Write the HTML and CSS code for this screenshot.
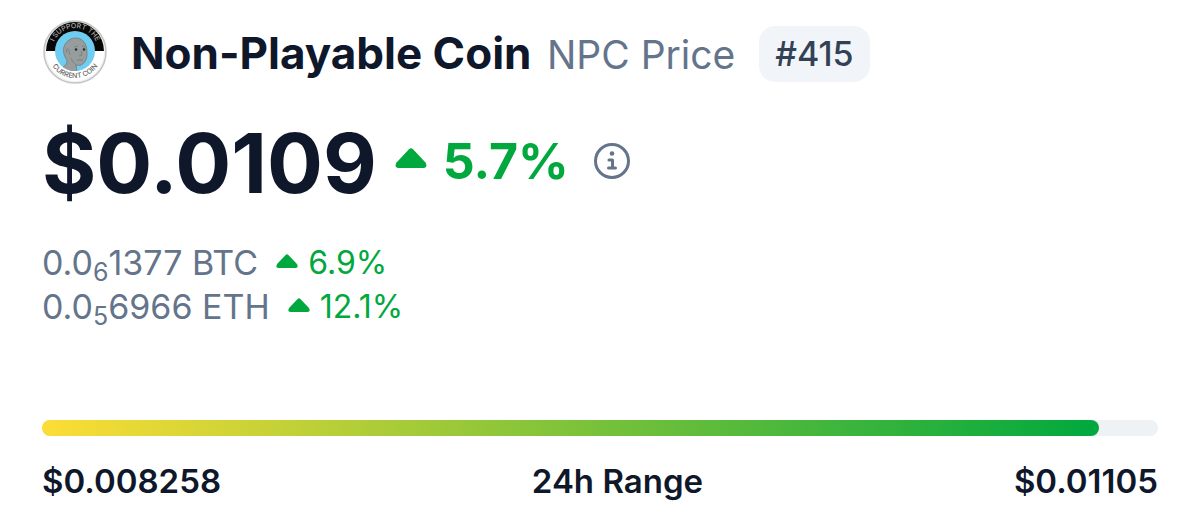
FILE: index.html
```
<!DOCTYPE html>
<html lang="en">

<head>
    <meta charset="UTF-8">
    <meta name="viewport" content="width=device-width, initial-scale=1.0">
    <title>Non-Playable Coin (NPC) Price</title>
    <link rel="stylesheet" href="styles.css">
</head>

<body>

    <main class="coin">
        <div class="coin-header">
            <svg class="coin-logo" viewBox="0 0 64 64" role="img" aria-label="Non-Playable Coin logo">
                <defs>
                    <clipPath id="face-clip">
                        <circle cx="32" cy="31" r="20" />
                    </clipPath>
                    <path id="arc-top" d="M9 31a23 23 0 0 1 46 0" />
                    <path id="arc-bottom" d="M4 30a28 28 0 0 0 56 0" />
                </defs>
                <circle cx="32" cy="32" r="31" fill="#f1f1f1" stroke="#c4c4c4" stroke-width="1.5" />
                <circle cx="32" cy="32" r="29" fill="#fff" />
                <path d="M3 31a29 29 0 0 1 58 0z" fill="#080808" />
                <circle cx="32" cy="31" r="20" fill="#70cdf2" />
                <g clip-path="url(#face-clip)">
                    <path d="M16 49c5-2 8-4 8-9-4-5-5-12-1-17 4-6 14-7 18-1 3 4 3 8 3 12 0 5-2 9-6 11-2 1-4 0-5 0l1 7z" fill="#979c9d" stroke="#747b7e" stroke-width=".8" />
                    <path d="M24 33c-2-4 1-6 2-2l1 4M28 38c1 3 3 5 5 7" fill="none" stroke="#747b7e" stroke-width=".8" />
                    <path d="M38 31l1 4-3 1M34 40h6M31 27l4-1M39 26l3 1" fill="none" stroke="#747b7e" stroke-width=".8" />
                    <circle cx="33" cy="29.500" r="1.300" fill="#292d30" />
                    <circle cx="41" cy="29.500" r="1.300" fill="#292d30" />
                </g>
                <text class="logo-text logo-text-light"><textPath href="#arc-top" startOffset="50%">I SUPPORT THE</textPath></text>
                <text class="logo-text"><textPath href="#arc-bottom" startOffset="50%">CURRENT COIN</textPath></text>
            </svg>
            <h1 class="coin-name">Non-Playable Coin <span class="coin-symbol">NPC Price</span></h1>
            <span class="rank">#415</span>
        </div>

        <div class="price-row">
            <span class="price">$0.0109</span>
            <div class="price-info">
                <span class="change change-large">
                    <svg class="caret" viewBox="0 0 32 20" aria-hidden="true">
                        <path d="M14 1.2Q16 -.5 18 1.2L30.500 14.500Q33 19.500 28.500 20H3.500Q-1 19.500 1.500 14.500z" />
                    </svg>
                    5.7%
                </span>
                <button class="info" type="button" aria-label="Price information">
                    <svg viewBox="0 0 38 38" aria-hidden="true">
                        <circle cx="19" cy="19" r="16.500" />
                        <path d="M16 18h3.500v8M15.500 26h7" />
                        <circle class="info-dot" cx="19" cy="11.500" r="2.300" />
                    </svg>
                </button>
            </div>
        </div>

        <div class="pairs">
            <div class="pair">
                <span>0.0<sub>6</sub>1377 BTC</span>
                <span class="change">
                    <svg class="caret" viewBox="0 0 32 20" aria-hidden="true">
                        <path d="M14 1.2Q16 -.5 18 1.2L30.500 14.500Q33 19.500 28.500 20H3.500Q-1 19.500 1.500 14.500z" />
                    </svg>
                    6.9%
                </span>
            </div>
            <div class="pair">
                <span>0.0<sub>5</sub>6966 ETH</span>
                <span class="change">
                    <svg class="caret" viewBox="0 0 32 20" aria-hidden="true">
                        <path d="M14 1.2Q16 -.5 18 1.2L30.500 14.500Q33 19.500 28.500 20H3.500Q-1 19.500 1.500 14.500z" />
                    </svg>
                    12.1%
                </span>
            </div>
        </div>

        <div class="range-bar">
            <div class="range-fill" style="width: 94.7%"></div>
        </div>
        <div class="range-labels">
            <span>$0.008258</span>
            <span>24h Range</span>
            <span>$0.01105</span>
        </div>
    </main>

</body>

</html>
```
FILE: styles.css
```
* {
    margin: 0;
    padding: 0;
    box-sizing: border-box;
}

body {
    font-family: Inter, sans-serif;
    font-size: 33px;
    line-height: 44px;
    color: #0f172a;
    background-color: #fff;
}

.coin {
    padding: 20px 42px 8px;
}

.coin-header {
    display: flex;
    align-items: center;
}

.coin-logo {
    align-self: flex-start;
    width: 64px;
    height: 64px;
    margin-left: 1px;
    margin-right: 24px;
    flex-shrink: 0;
}

.logo-text {
    font-size: 7px;
    font-weight: 500;
    text-anchor: middle;
    fill: #666;
}

.logo-text-light {
    fill: #aaa;
}

.coin-name {
    font-size: 44px;
    font-weight: 700;
    line-height: 67px;
}

.coin-symbol {
    margin-left: 5px;
    font-size: 39px;
    font-weight: 400;
    color: #64748b;
}

.rank {
    margin-left: 24px;
    padding: 6px 16px;
    border-radius: 16px;
    font-size: 34px;
    font-weight: 500;
    color: #334155;
    background-color: #f1f5f9;
}

.price-row {
    display: flex;
    align-items: center;
    margin-top: 26px;
}

.price {
    font-size: 83px;
    font-weight: 700;
    line-height: 98px;
}

.price-info {
    display: flex;
    align-items: center;
    margin-left: 18px;
    padding-bottom: 5px;
}

.change {
    display: flex;
    align-items: center;
    gap: 10px;
    color: #00a83e;
}

.caret {
    width: 22px;
    height: 14px;
    margin-bottom: 5px;
    fill: currentColor;
}

.change-large {
    gap: 16px;
    font-size: 50px;
    font-weight: 700;
}

.change-large .caret {
    width: 32px;
    height: 20px;
}

.info {
    width: 38px;
    height: 38px;
    margin-left: 24px;
    border: none;
    background: none;
    cursor: pointer;
}

.info svg {
    display: block;
    fill: none;
    stroke: #64748b;
    stroke-width: 3;
    stroke-linecap: round;
    stroke-linejoin: round;
}

.info .info-dot {
    fill: #64748b;
    stroke: none;
}

.pairs {
    margin-top: 29px;
    font-size: 34px;
    color: #64748b;
}

.pair {
    display: flex;
    align-items: center;
    gap: 18px;
}

.pair .change {
    font-size: 32px;
}

.pair sub {
    font-size: 25px;
    line-height: 0;
    vertical-align: -6px;
}

.range-bar {
    height: 16px;
    margin-top: 91px;
    border-radius: 8px;
    background-color: #eff2f5;
}

.range-fill {
    height: 100%;
    border-radius: 8px;
    background: linear-gradient(90deg, #fddd35, #00a83e);
}

.range-labels {
    display: flex;
    justify-content: space-between;
    margin-top: 23px;
    font-weight: 600;
}
```
